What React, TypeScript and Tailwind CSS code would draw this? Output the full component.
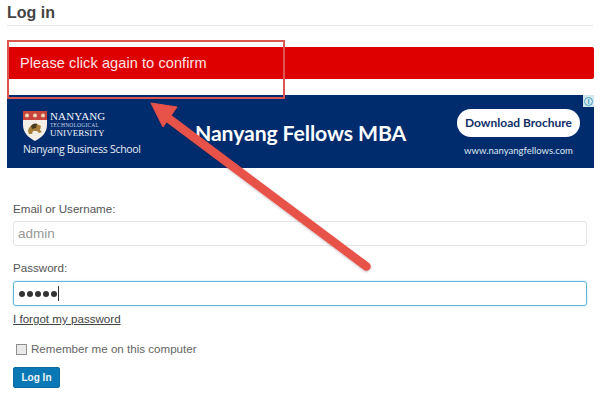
export default function App() {
  return (
    <div className="relative w-[600px] h-[406px] bg-white overflow-hidden font-['Liberation_Sans',Arial,sans-serif]">
      <div className="flex flex-col px-[7px]">
        <h1 className="mt-[3px] h-[23px] border-b border-[#e6e6e6] text-[16px] leading-[19px] font-bold text-[#444]">Log in</h1>
        <div className="mt-[21px] h-[32px] w-[587px] rounded-[2px] bg-[#de0000] pl-[13px] text-[14.5px] leading-[33px] tracking-[0.1px] text-[#ffe4e4]">
          Please click again to confirm
        </div>
        <Banner />
        <form className="flex flex-col px-[6px]">
          <label className="mt-[34px] h-[14px] text-[11.6px] leading-[14px] text-[#555]">Email or Username:</label>
          <div className="mt-[5px] h-[25px] w-[574px] rounded-[3px] border border-[#e4e4e4] pl-[4px] text-[13.5px] leading-[23px] text-[#999]">admin</div>
          <label className="mt-[15px] h-[14px] text-[11.6px] leading-[14px] text-[#555]">Password:</label>
          <div className="mt-[6px] flex h-[25px] w-[574px] items-center rounded-[3px] border border-[#5fb6d8] pl-[5px] shadow-[0_0_2px_#a5d9ec]">
            <span className="flex gap-[2px]">
              {[0, 1, 2, 3, 4].map((i) => (
                <span key={i} className="h-[6px] w-[6px] rounded-full bg-[#333]" />
              ))}
            </span>
            <span className="ml-[0.5px] h-[15px] w-[1px] bg-[#333]" />
          </div>
          <a className="mt-[6px] h-[14px] text-[11.6px] leading-[14px] text-[#444] underline">I forgot my password</a>
          <div className="mt-[16px] flex h-[14px] items-center pl-[3px]">
            <span className="h-[11px] w-[11px] border border-[#8f8f8f] bg-[#e9e9e9] shadow-[inset_0_0_1px_#fff]" />
            <span className="ml-[4px] text-[11.6px] leading-[14px] text-[#666]">Remember me on this computer</span>
          </div>
          <button type="button" className="mt-[11px] h-[21px] w-[47px] rounded-[2px] border border-[#0b6a9e] bg-[#0a78b4] text-[10px] font-bold leading-[19px] text-[#eef6fb]">
            Log In
          </button>
        </form>
      </div>

      <div className="absolute left-[7px] top-[40px] h-[59px] w-[278px] border-2 border-[#dc5650]" />
      <svg className="absolute left-0 top-0" width="600" height="406" viewBox="0 0 600 406" fill="none">
        <defs>
          <filter id="s" x="-10%" y="-10%" width="120%" height="120%">
            <feDropShadow dx="0" dy="1" stdDeviation="1" floodColor="#000" floodOpacity="0.25" />
          </filter>
        </defs>
        <g filter="url(#s)">
          <path d="M168 118 L366.5 266.5" stroke="#e8524a" strokeWidth="8.5" strokeLinecap="round" />
          <path d="M151 103 L177 107 L163 127 Z" fill="#e8524a" stroke="#e8524a" strokeWidth="1" strokeLinejoin="round" />
        </g>
      </svg>
    </div>
  );
}

function Banner() {
  return (
    <div className="relative mt-[16px] flex h-[73px] w-[587px] items-stretch bg-[#002c6e] text-white font-['Open_Sans',sans-serif]">
      <div className="ml-[16px] mt-[16px] flex w-[172px] flex-col">
        <div className="flex h-[30px] items-start">
          <Crest />
          <div className="ml-[3px] flex flex-col font-['Liberation_Serif',serif] text-[#f4f6fa]">
            <span className="text-[11px] leading-[11px] tracking-[0.15px]">NANYANG</span>
            <span className="text-[5.5px] leading-[6px] tracking-[0.2px] text-[#c9d3e4]">TECHNOLOGICAL</span>
            <span className="text-[9px] leading-[10px] tracking-[0.05px]">UNIVERSITY</span>
          </div>
        </div>
        <span className="mt-[1px] whitespace-nowrap text-[10.5px] leading-[14px] tracking-[-0.3px] text-[#e8edf5]">Nanyang Business School</span>
      </div>
      <div className="mt-[24px] w-[262px] whitespace-nowrap font-['Lato',sans-serif] text-[21.2px] font-bold leading-[28px] tracking-[-0.1px]">Nanyang Fellows MBA</div>
      <div className="mt-[14px] flex w-[123px] flex-col items-center">
        <div className="flex h-[28px] w-[123px] items-center justify-center whitespace-nowrap rounded-full bg-white font-['Lato',sans-serif] text-[12px] font-bold text-[#0f2f66]">Download Brochure</div>
        <span className="mt-[8px] whitespace-nowrap font-['Lato',sans-serif] text-[9.5px] leading-[12px] text-[#dfe6f0]">www.nanyangfellows.com</span>
      </div>
      <div className="absolute right-0 top-0 flex h-[12px] w-[11px] items-center justify-center bg-[#d3e6ee]">
        <span className="flex h-[9px] w-[9px] items-center justify-center rounded-full border border-[#4aa7c8] text-[7px] font-bold leading-none text-[#3d9dc2]">i</span>
      </div>
    </div>
  );
}

function Crest() {
  return (
    <svg width="24" height="30" viewBox="0 0 24 30" className="shrink-0">
      <path d="M0 0 H24 V14 C24 22 18 27 12 30 C6 27 0 22 0 14 Z" fill="#f3efe6" />
      <rect x="0" y="0" width="24" height="9" fill="#c8443c" />
      <circle cx="4" cy="4.5" r="2" fill="#eadbb8" />
      <circle cx="12" cy="4.5" r="2" fill="#eadbb8" />
      <circle cx="20" cy="4.5" r="2" fill="#eadbb8" />
      <path d="M5 20 C6 15 10 13 14 13 L18 15 L17 19 L19 21 L16 22 L14 20 L10 20 L9 23 L6 23 Z" fill="#a9803a" />
      <path d="M8 15 C9 13 12 12 14 13 L13 17 L9 18 Z" fill="#4a3a22" />
    </svg>
  );
}
